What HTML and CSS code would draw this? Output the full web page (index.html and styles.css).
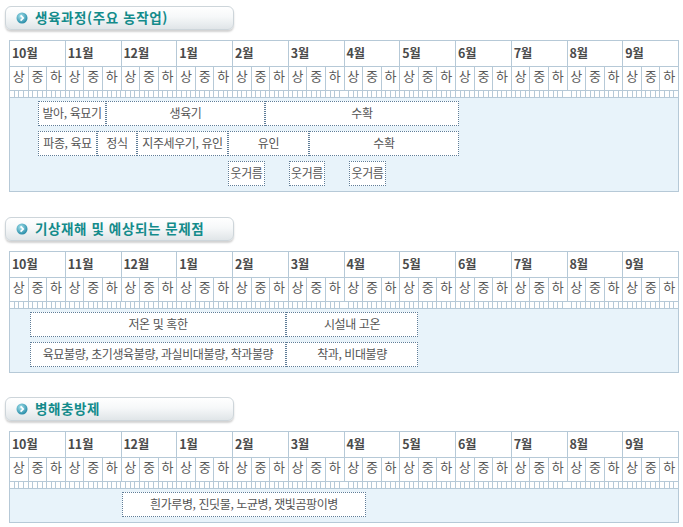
FILE: index.html
```html
<!DOCTYPE html>
<html lang="ko">
<head>
<meta charset="utf-8">
<title>재배력</title>
<link rel="stylesheet" href="styles.css">
</head>
<body>

<section class="sec">
  <h2 class="title"><svg class="ico" width="12" height="12" viewBox="0 0 12 12"><defs><radialGradient id="g1" cx="40%" cy="35%" r="70%"><stop offset="0" stop-color="#a8e4ee"/><stop offset="1" stop-color="#1f86a3"/></radialGradient></defs><circle cx="6" cy="6" r="5.5" fill="url(#g1)"/><path d="M4.6 3.4 L7.2 6 L4.6 8.6" fill="none" stroke="#fff" stroke-width="1.7"/></svg>생육과정(주요 농작업)</h2>
  <div class="tl">
    <div class="m">10월</div><div class="m">11월</div><div class="m">12월</div><div class="m">1월</div><div class="m">2월</div><div class="m">3월</div><div class="m">4월</div><div class="m">5월</div><div class="m">6월</div><div class="m">7월</div><div class="m">8월</div><div class="m">9월</div>
    <div class="s">상</div><div class="s">중</div><div class="s">하</div><div class="s">상</div><div class="s">중</div><div class="s">하</div><div class="s">상</div><div class="s">중</div><div class="s">하</div><div class="s">상</div><div class="s">중</div><div class="s">하</div><div class="s">상</div><div class="s">중</div><div class="s">하</div><div class="s">상</div><div class="s">중</div><div class="s">하</div><div class="s">상</div><div class="s">중</div><div class="s">하</div><div class="s">상</div><div class="s">중</div><div class="s">하</div><div class="s">상</div><div class="s">중</div><div class="s">하</div><div class="s">상</div><div class="s">중</div><div class="s">하</div><div class="s">상</div><div class="s">중</div><div class="s">하</div><div class="s">상</div><div class="s">중</div><div class="s">하</div>
    <div class="ruler"></div>
    <div class="area">
      <div class="row">
        <div class="bar" style="left:28px;width:68px">발아, 육묘기</div>
        <div class="bar" style="left:96px;width:159px">생육기</div>
        <div class="bar" style="left:255px;width:194px">수확</div>
      </div>
      <div class="row">
        <div class="bar" style="left:28px;width:59px">파종, 육묘</div>
        <div class="bar" style="left:87px;width:40px">정식</div>
        <div class="bar" style="left:127px;width:91px">지주세우기, 유인</div>
        <div class="bar" style="left:218px;width:81px">유인</div>
        <div class="bar" style="left:299px;width:150px">수확</div>
      </div>
      <div class="row">
        <div class="bar" style="left:218px;width:37px">웃거름</div>
        <div class="bar" style="left:279px;width:36px">웃거름</div>
        <div class="bar" style="left:339px;width:37px">웃거름</div>
      </div>
    </div>
  </div>
</section>

<section class="sec">
  <h2 class="title"><svg class="ico" width="12" height="12" viewBox="0 0 12 12"><defs><radialGradient id="g2" cx="40%" cy="35%" r="70%"><stop offset="0" stop-color="#a8e4ee"/><stop offset="1" stop-color="#1f86a3"/></radialGradient></defs><circle cx="6" cy="6" r="5.5" fill="url(#g2)"/><path d="M4.6 3.4 L7.2 6 L4.6 8.6" fill="none" stroke="#fff" stroke-width="1.7"/></svg>기상재해 및 예상되는 문제점</h2>
  <div class="tl">
    <div class="m">10월</div><div class="m">11월</div><div class="m">12월</div><div class="m">1월</div><div class="m">2월</div><div class="m">3월</div><div class="m">4월</div><div class="m">5월</div><div class="m">6월</div><div class="m">7월</div><div class="m">8월</div><div class="m">9월</div>
    <div class="s">상</div><div class="s">중</div><div class="s">하</div><div class="s">상</div><div class="s">중</div><div class="s">하</div><div class="s">상</div><div class="s">중</div><div class="s">하</div><div class="s">상</div><div class="s">중</div><div class="s">하</div><div class="s">상</div><div class="s">중</div><div class="s">하</div><div class="s">상</div><div class="s">중</div><div class="s">하</div><div class="s">상</div><div class="s">중</div><div class="s">하</div><div class="s">상</div><div class="s">중</div><div class="s">하</div><div class="s">상</div><div class="s">중</div><div class="s">하</div><div class="s">상</div><div class="s">중</div><div class="s">하</div><div class="s">상</div><div class="s">중</div><div class="s">하</div><div class="s">상</div><div class="s">중</div><div class="s">하</div>
    <div class="ruler"></div>
    <div class="area">
      <div class="row">
        <div class="bar" style="left:20px;width:256px">저온 및 혹한</div>
        <div class="bar" style="left:276px;width:132px">시설내 고온</div>
      </div>
      <div class="row">
        <div class="bar" style="left:20px;width:256px">육묘불량, 초기생육불량, 과실비대불량, 착과불량</div>
        <div class="bar" style="left:276px;width:132px">착과, 비대불량</div>
      </div>
    </div>
  </div>
</section>

<section class="sec">
  <h2 class="title"><svg class="ico" width="12" height="12" viewBox="0 0 12 12"><defs><radialGradient id="g3" cx="40%" cy="35%" r="70%"><stop offset="0" stop-color="#a8e4ee"/><stop offset="1" stop-color="#1f86a3"/></radialGradient></defs><circle cx="6" cy="6" r="5.5" fill="url(#g3)"/><path d="M4.6 3.4 L7.2 6 L4.6 8.6" fill="none" stroke="#fff" stroke-width="1.7"/></svg>병해충방제</h2>
  <div class="tl">
    <div class="m">10월</div><div class="m">11월</div><div class="m">12월</div><div class="m">1월</div><div class="m">2월</div><div class="m">3월</div><div class="m">4월</div><div class="m">5월</div><div class="m">6월</div><div class="m">7월</div><div class="m">8월</div><div class="m">9월</div>
    <div class="s">상</div><div class="s">중</div><div class="s">하</div><div class="s">상</div><div class="s">중</div><div class="s">하</div><div class="s">상</div><div class="s">중</div><div class="s">하</div><div class="s">상</div><div class="s">중</div><div class="s">하</div><div class="s">상</div><div class="s">중</div><div class="s">하</div><div class="s">상</div><div class="s">중</div><div class="s">하</div><div class="s">상</div><div class="s">중</div><div class="s">하</div><div class="s">상</div><div class="s">중</div><div class="s">하</div><div class="s">상</div><div class="s">중</div><div class="s">하</div><div class="s">상</div><div class="s">중</div><div class="s">하</div><div class="s">상</div><div class="s">중</div><div class="s">하</div><div class="s">상</div><div class="s">중</div><div class="s">하</div>
    <div class="ruler"></div>
    <div class="area">
      <div class="row">
        <div class="bar" style="left:112px;width:244px">흰가루병, 진딧물, 노균병, 잿빛곰팡이병</div>
      </div>
    </div>
  </div>
</section>

</body>
</html>
```
FILE: styles.css
```css
* { box-sizing: border-box; }
html, body { margin: 0; padding: 0; background: #fff; }
body {
  padding: 6px 0 0 5px;
  font-family: "Noto Sans CJK KR", "Noto Sans", sans-serif;
  color: #555;
}
.sec { margin-bottom: 25px; }
.sec:nth-child(2) { margin-bottom: 24px; }
.title {
  margin: 0;
  width: 229px;
  height: 24px;
  display: flex;
  align-items: center;
  gap: 7px;
  padding-left: 10px;
  border: 1px solid #cdd5da;
  border-radius: 6px;
  background: linear-gradient(#ffffff 0%, #f6f8f9 45%, #e0e5e8 100%);
  box-shadow: 0 2px 2px rgba(0, 0, 0, 0.18);
  font-size: 13.5px;
  font-weight: bold;
  color: #138b8b;
  line-height: 1;
  letter-spacing: 0.6px;
}
.ico { flex: none; display: block; }
.tl {
  margin: 10px 0 0 4px;
  width: 670px;
  display: grid;
  grid-template-columns: repeat(36, 1fr);
  border-left: 1px solid #b6c9d7;
  border-top: 1px solid #b6c9d7;
}
.m {
  grid-column: span 3;
  height: 26px;
  border-right: 1px solid #b6c9d7;
  border-bottom: 1px solid #b6c9d7;
  padding: 4px 0 0 2px;
  font-size: 12.5px;
  font-weight: bold;
  color: #4a4a4a;
  line-height: 16px;
  letter-spacing: -0.3px;
}
.s {
  height: 24px;
  border-right: 1px solid #b6c9d7;
  border-bottom: 1px solid #b6c9d7;
  text-align: center;
  font-size: 13px;
  line-height: 16px;
  padding-top: 1px;
  color: #5a5a5a;
}
.ruler {
  grid-column: 1 / -1;
  height: 7px;
  border-right: 1px solid #b6c9d7;
  border-bottom: 1px solid #b6c9d7;
  background-color: #fff;
  background-image: repeating-linear-gradient(90deg, transparent 0, transparent calc(669px / 144 - 1px), #b6c9d7 calc(669px / 144 - 1px), #b6c9d7 calc(669px / 144));
}
.area {
  grid-column: 1 / -1;
  background: #e8f3fa;
  border-right: 1px solid #b6c9d7;
  border-bottom: 1px solid #b6c9d7;
  padding: 3px 0 5px;
  display: flex;
  flex-direction: column;
  gap: 5px;
}
.row { position: relative; height: 25px; }
.bar {
  position: absolute;
  top: 0;
  height: 25px;
  background: #fff;
  border: 1px dotted #5f7d98;
  text-align: center;
  font-size: 12px;
  line-height: 22px;
  letter-spacing: -0.4px;
  color: #555;
  white-space: nowrap;
  overflow: hidden;
}
```
